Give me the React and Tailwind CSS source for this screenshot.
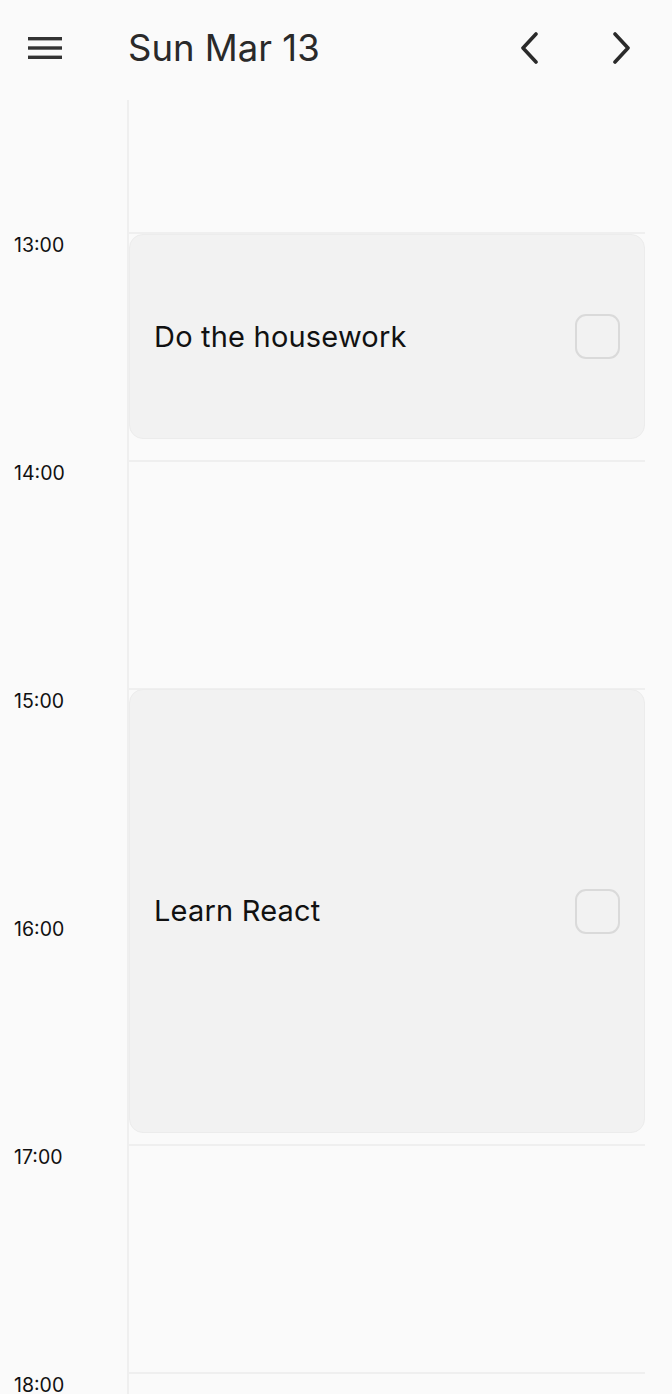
import React, { useState } from "react";

const HOUR_HEIGHT = 228;
const hours = [13, 14, 15, 16, 17, 18];

const initialTasks = [
  { id: 1, title: "Do the housework", top: 2, height: 205 },
  { id: 2, title: "Learn React", top: 2 * HOUR_HEIGHT + 1, height: 444 },
];

const Header = () => (
  <div className="h-[100px] flex items-center">
    <button className="w-[128px] h-full flex items-center pl-[28px] pb-[6px]">
      <svg width="34" height="24" viewBox="0 0 34 24">
        <rect x="0" y="2" width="34" height="3.4" fill="#333" />
        <rect x="0" y="11.3" width="34" height="3.4" fill="#333" />
        <rect x="0" y="20.6" width="34" height="3.4" fill="#333" />
      </svg>
    </button>
    <h1 className="flex-1 text-[36.5px] leading-none text-[#2a2a2a] mb-[4px]">
      Sun Mar 13
    </h1>
    <div className="flex items-center gap-[75px] pr-[41px] mb-[4px]">
      <button>
        <svg width="18" height="32" viewBox="0 0 18 32" fill="none">
          <path
            d="M16 2 L3 16 L16 30"
            stroke="#2a2a2a"
            strokeWidth="3.6"
            strokeLinecap="round"
            strokeLinejoin="round"
          />
        </svg>
      </button>
      <button>
        <svg width="18" height="32" viewBox="0 0 18 32" fill="none">
          <path
            d="M2 2 L15 16 L2 30"
            stroke="#2a2a2a"
            strokeWidth="3.6"
            strokeLinecap="round"
            strokeLinejoin="round"
          />
        </svg>
      </button>
    </div>
  </div>
);

const Task = ({ task, onToggle }) => (
  <div
    className="absolute left-0 right-0 bg-[#f2f2f2] border border-[#ececec] rounded-[14px] flex items-center justify-between pl-[24px] pr-[24px]"
    style={{ top: task.top, height: task.height }}
  >
    <span className="text-[29px] tracking-[0.2px] text-[#111]">{task.title}</span>
    <button
      onClick={() => onToggle(task.id)}
      className="w-[45px] h-[45px] rounded-[11px] border-2 border-[#dadada]"
    />
  </div>
);

const App = () => {
  const [tasks, setTasks] = useState(initialTasks);

  const toggle = (id) =>
    setTasks(tasks.map((t) => (t.id === id ? { ...t, done: !t.done } : t)));

  return (
    <div
      className="min-h-screen h-[1394px] overflow-hidden bg-[#fafafa]"
      style={{ fontFamily: "Inter, 'Noto Sans', sans-serif" }}
    >
      <Header />
      <div className="flex">
        <div className="w-[127px] shrink-0 pt-[132px]">
          {hours.map((h) => (
            <div key={h} className="h-[228px] pl-[14px] pt-[2px] text-[19.5px] leading-[22px] text-[#111]">
              {h}:00
            </div>
          ))}
        </div>
        <div className="flex-1 border-l-2 border-[#efefef] mr-[27px]">
          <div className="h-[132px]" />
          <div className="relative">
            {hours.map((h) => (
              <div key={h} className="h-[228px] border-t-2 border-[#efefef]" />
            ))}
            {tasks.map((t) => (
              <Task key={t.id} task={t} onToggle={toggle} />
            ))}
          </div>
        </div>
      </div>
    </div>
  );
};

export default App;
